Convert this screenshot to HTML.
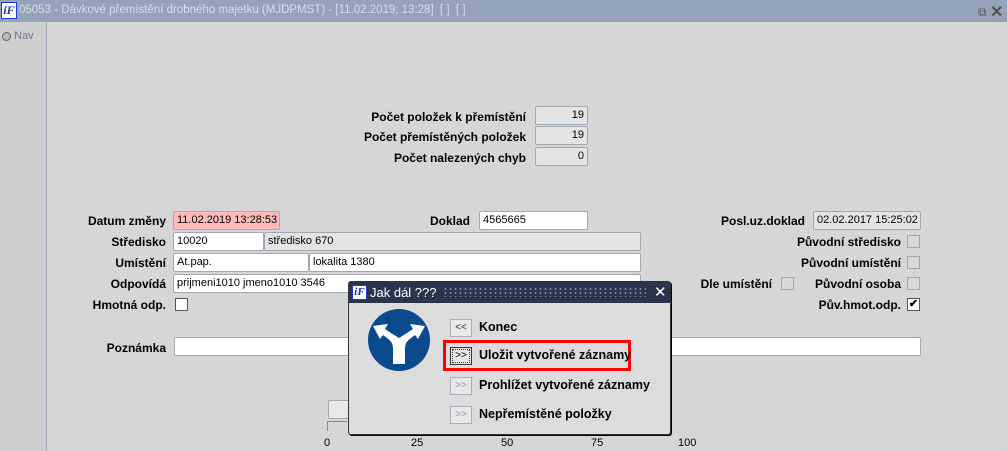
<!DOCTYPE html>
<html><head><meta charset="utf-8"><style>
*{box-sizing:border-box;margin:0;padding:0}
body{width:1007px;height:451px;overflow:hidden;background:#d6d6d6;font-family:"Liberation Sans",Arial,sans-serif;font-size:12px;color:#000;position:relative}
.a{position:absolute}
.lbl{position:absolute;font-weight:bold;text-align:right;white-space:nowrap}
.in{position:absolute;height:19px;border:1px solid #a0a8b4;border-radius:2px;background:#fff;padding:2px 3px;white-space:nowrap;overflow:hidden;font-size:11px}
.ro{background:#e4e4e4}
.cb{position:absolute;width:13px;height:13px;border:1px solid #a0a8b4;background:#d8d8d8}
.cbw{background:#fff;border-color:#555}
.btn{position:absolute;width:22px;height:18px;border:1px solid #a9b0ba;background:#e8e8e8;font-size:10px;text-align:center;line-height:15px;color:#333}
</style></head><body>
<div class="a" style="left:0;top:0;width:1007px;height:22px;background:#94a3b8"></div>
<div class="a" style="left:1px;top:2px;width:16px;height:17px;background:#fff;border:1px solid #1c3cc8;color:#1c2ea8;font:italic bold 12px 'Liberation Serif',serif;line-height:15px;text-align:center">iF</div>
<div class="a" style="left:19px;top:4px;color:#d8dde6;font-size:11.5px;white-space:nowrap">05053 - Dávkové přemístění drobného majetku (MJDPMST) - [11.02.2019; 13:28]&nbsp; [ ]&nbsp; [ ]</div>
<div class="a" style="left:978px;top:5px;color:#555;font-size:12px">&#10697;</div>
<div class="a" style="left:990px;top:2px;color:#555;font-size:16px;font-weight:bold">✕</div>
<div class="a" style="left:0;top:22px;width:47px;height:429px;background:#cfcfcf;border-right:1px solid #9aa6b6"></div>
<div class="a" style="left:2px;top:32px;width:9px;height:9px;border-radius:50%;border:1px solid #666;background:#bbb"></div>
<div class="a" style="left:14px;top:30px;color:#6a7490;font-size:11px">Nav</div>

<div class="lbl" style="right:481px;top:110px">Počet položek k přemístění</div>
<div class="in ro" style="left:535px;top:106px;width:53px;text-align:right">19</div>
<div class="lbl" style="right:481px;top:130px">Počet přemístěných položek</div>
<div class="in ro" style="left:535px;top:126px;width:53px;text-align:right">19</div>
<div class="lbl" style="right:481px;top:151px">Počet nalezených chyb</div>
<div class="in ro" style="left:535px;top:147px;width:53px;text-align:right">0</div>

<div class="lbl" style="right:841px;top:214px">Datum změny</div>
<div class="in" style="left:173px;top:211px;width:107px;background:#fbb;border-color:#d99">11.02.2019 13:28:53</div>
<div class="lbl" style="right:537px;top:214px">Doklad</div>
<div class="in" style="left:479px;top:211px;width:109px">4565665</div>
<div class="lbl" style="right:202px;top:214px">Posl.uz.doklad</div>
<div class="in ro" style="left:813px;top:211px;width:108px">02.02.2017 15:25:02</div>

<div class="lbl" style="right:841px;top:235px">Středisko</div>
<div class="in" style="left:173px;top:232px;width:91px">10020</div>
<div class="in ro" style="left:264px;top:232px;width:377px">středisko 670</div>
<div class="lbl" style="right:106px;top:235px">Původní středisko</div>
<div class="cb" style="left:907px;top:235px"></div>

<div class="lbl" style="right:841px;top:256px">Umístění</div>
<div class="in" style="left:173px;top:253px;width:136px">At.pap.</div>
<div class="in" style="left:309px;top:253px;width:332px">lokalita 1380</div>
<div class="lbl" style="right:106px;top:256px">Původní umístění</div>
<div class="cb" style="left:907px;top:256px"></div>

<div class="lbl" style="right:841px;top:277px">Odpovídá</div>
<div class="in" style="left:173px;top:274px;width:468px">prijmeni1010 jmeno1010 3546</div>
<div class="lbl" style="right:235px;top:277px">Dle umístění</div>
<div class="cb" style="left:781px;top:277px"></div>
<div class="lbl" style="right:106px;top:277px">Původní osoba</div>
<div class="cb" style="left:907px;top:277px"></div>

<div class="lbl" style="right:841px;top:298px">Hmotná odp.</div>
<div class="cb cbw" style="left:175px;top:298px"></div>
<div class="lbl" style="right:106px;top:298px">Pův.hmot.odp.</div>
<div class="cb cbw" style="left:907px;top:298px;font-size:11px;line-height:11px;text-align:center;font-weight:bold">✔</div>

<div class="lbl" style="right:841px;top:341px">Poznámka</div>
<div class="in" style="left:174px;top:337px;width:747px;height:19px"></div>

<div class="a" style="left:328px;top:400px;width:30px;height:19px;border:1px solid #a0a8b4;border-radius:2px;background:#e8e8e8"></div>
<div class="a" style="left:327px;top:421px;width:20px;height:1px;background:#888"></div>
<div class="a" style="left:327px;top:421px;width:1px;height:10px;background:#888"></div>
<div class="a" style="left:324px;top:437px;font-size:11px">0</div>
<div class="a" style="left:411px;top:437px;font-size:11px">25</div>
<div class="a" style="left:501px;top:437px;font-size:11px">50</div>
<div class="a" style="left:591px;top:437px;font-size:11px">75</div>
<div class="a" style="left:678px;top:437px;font-size:11px">100</div>

<div class="a" style="left:348px;top:281px;width:323px;height:154px;background:#dcdcdc;border:1px solid #333;border-radius:3px;box-shadow:1px 1px 0 #000"></div>
<div class="a" style="left:349px;top:282px;width:321px;height:21px;background:#29354a"></div>
<div class="a" style="left:352px;top:285px;width:15px;height:15px;background:#fff;border:1px solid #1c3cc8;color:#1c2ea8;font:italic bold 11px 'Liberation Serif',serif;line-height:13px;text-align:center">iF</div>
<div class="a" style="left:370px;top:285px;color:#fff;font-size:13px">Jak dál ???</div>
<div class="a" style="left:443px;top:287px;width:203px;height:10px;background-image:radial-gradient(#7d8899 1px,transparent 1.2px);background-size:5px 4px"></div>
<div class="a" style="left:654px;top:283px;color:#fff;font-size:15px">✕</div>
<svg class="a" style="left:367px;top:308px" width="64" height="64" viewBox="0 0 64 64">
<circle cx="32" cy="32" r="31" fill="#0b4a8c"/>
<path d="M26 56 V40 Q26 34 20 30 L16 27 L13 31 L6 18 L21 16 L18 21 L24 25 Q32 30 32 30 Q32 30 40 25 L46 21 L43 16 L58 18 L51 31 L48 27 L44 30 Q38 34 38 40 V56 Z" fill="#fff"/>
</svg>
<div class="btn" style="left:450px;top:319px">&lt;&lt;</div>
<div class="a" style="left:479px;top:320px;font-weight:bold;font-size:12.5px">Konec</div>
<div class="a" style="left:443px;top:340px;width:188px;height:31px;border:3px solid #f00"></div>
<div class="btn" style="left:450px;top:347px;border-color:#333;outline:1px dotted #333;outline-offset:-3px;color:#000">&gt;&gt;</div>
<div class="a" style="left:479px;top:348px;font-weight:bold;font-size:12.5px">Uložit vytvořené záznamy</div>
<div class="btn" style="left:450px;top:377px;color:#8899bb">&gt;&gt;</div>
<div class="a" style="left:479px;top:378px;font-weight:bold;font-size:12.5px">Prohlížet vytvořené záznamy</div>
<div class="btn" style="left:450px;top:406px;color:#8899bb">&gt;&gt;</div>
<div class="a" style="left:479px;top:407px;font-weight:bold;font-size:12.5px">Nepřemístěné položky</div>
</body></html>
